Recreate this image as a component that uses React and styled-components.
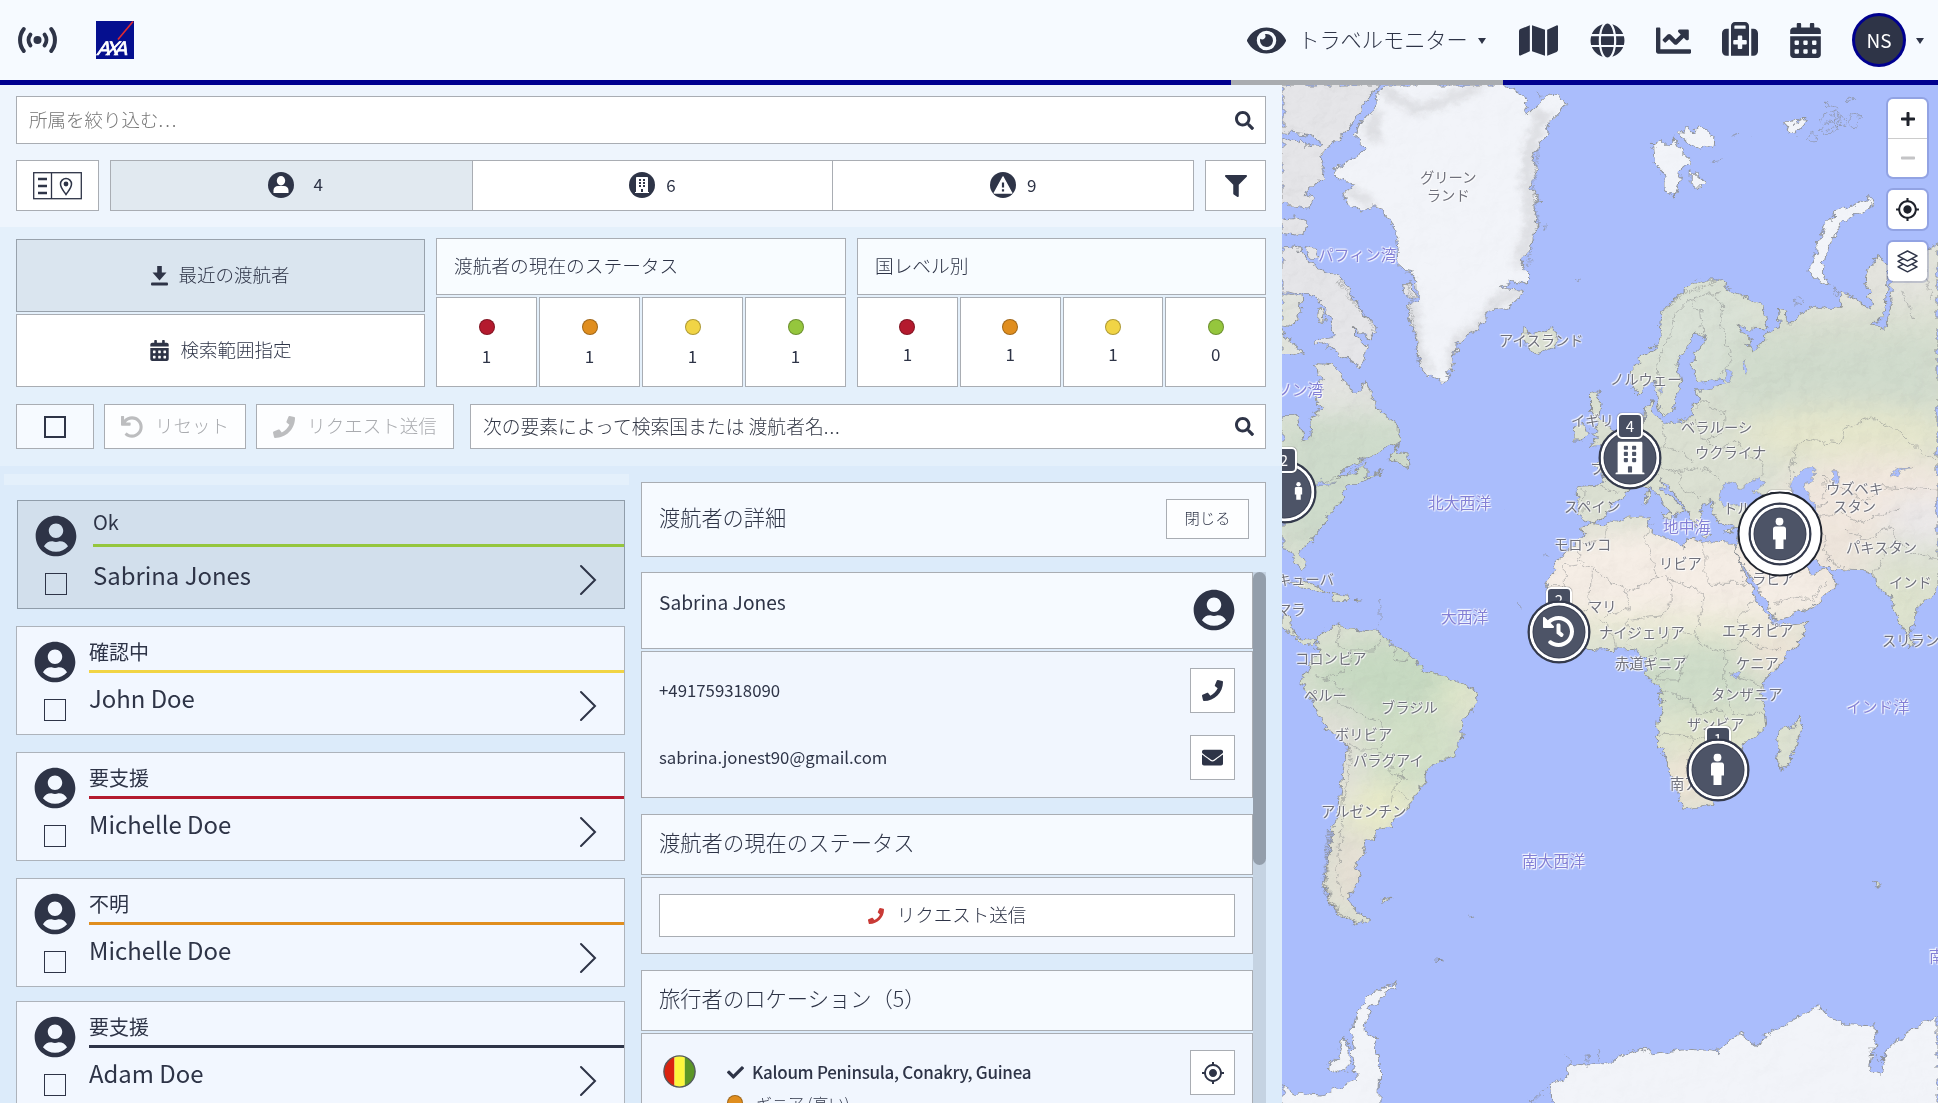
import React from "react";
import styled, { createGlobalStyle } from "styled-components";
import {
  FaEye, FaMap, FaGlobe, FaChartLine, FaCalendarAlt, FaSearch, FaFilter, FaUndo,
  FaPhone, FaEnvelope, FaCheck, FaUserCircle, FaBuilding, FaHistory, FaPlus, FaMinus,
} from "react-icons/fa";
import { FaSuitcaseMedical } from "react-icons/fa6";
import { MdMyLocation } from "react-icons/md";

const INK = "#2e3447";
const NAVY = "#00008f";
const LINE = "#a9adb3";
const RED = "#b41a2e";
const ORANGE = "#e08e1f";
const YELLOW = "#f1d445";
const GREEN = "#95c63d";

const Global = createGlobalStyle`
  *, *::before, *::after { box-sizing: border-box; }
  body { margin: 0; overflow: hidden; font-family: "Noto Sans CJK JP", "Noto Sans", sans-serif; color: ${INK}; }
  svg { display: block; flex: none; }
`;

const Page = styled.div`
  width: 1938px; height: 1103px; display: flex; flex-direction: column; overflow: hidden;
  background: #dcebfa;
`;

/* ---------- header ---------- */
const Header = styled.header`
  height: 85px; flex: none; display: flex; justify-content: space-between;
  background: #f6faff; border-bottom: 5px solid ${NAVY};
`;
const Brand = styled.div`
  display: flex; align-items: center; gap: 39px; padding-left: 18px; height: 80px;
`;
const Nav = styled.nav`display: flex; height: 85px; padding-right: 14px;`;
const NavActive = styled.div`
  width: 272px; height: 85px; padding: 0 17px 0 16px; display: flex; align-items: center;
  justify-content: space-between;
  border-bottom: 5px solid #a9acb0; font-size: 21.2px; font-weight: 300; white-space: nowrap;
  span { margin: -2px -2px 0 0; line-height: 30px; }
`;
const NavIcons = styled.div`
  height: 80px; display: flex; align-items: center; padding-left: 15px;
`;
const NavItem = styled.div`
  width: ${(p) => p.$w}px; margin-right: ${(p) => p.$gap}px; display: flex; justify-content: center;
`;
const Avatar = styled.div`
  width: 54px; height: 54px; border-radius: 50%; border: 3px solid ${NAVY}; background: ${INK};
  color: #fff; font-size: 19px; line-height: 47px; text-align: center; margin-right: 10px;
`;
const Caret = styled.i`
  border: 4.5px solid transparent; border-top: 6px solid ${INK}; border-bottom: 0; margin-top: 2px;
`;

/* ---------- left side ---------- */
const Body = styled.div`flex: 1; min-height: 0; display: flex;`;
const Panel = styled.main`width: 1282px; flex: none; display: flex; flex-direction: column;`;
const Band = styled.section`
  flex: none; height: ${(p) => p.$h}px; padding: ${(p) => p.$top}px 16px 0; background: ${(p) => p.$bg};
`;
const Row = styled.div`display: flex; gap: ${(p) => p.$gap || 10}px; margin-top: ${(p) => p.$mt || 0}px;`;
const SearchBox = styled.div`
  height: ${(p) => p.$h}px; flex: 1; border: 1px solid ${LINE}; background: #fff; margin-left: ${(p) => p.$ml || 0}px;
  display: flex; align-items: center; justify-content: space-between; padding: 0 11px 0 12px;
  font-size: ${(p) => p.$size}px; font-weight: 300; color: ${(p) => (p.$dim ? "#767676" : "#333846")};
  span { line-height: 28px; margin-top: -2px; }
  b { font-weight: 300; letter-spacing: ${(p) => (p.$dim ? 2 : 1)}px; }
  svg { color: ${INK}; }
`;
const IconButton = styled.button`
  width: ${(p) => p.$w}px; height: ${(p) => p.$h}px; padding: 0; border: 1px solid ${LINE};
  background: ${(p) => p.$bg || "#fff"}; display: flex; align-items: center; justify-content: center; color: ${INK};
`;
const Tabs = styled.div`
  flex: 1; height: 51px; display: grid; grid-template-columns: repeat(3, 1fr); border: 1px solid ${LINE}; background: #fff;
`;
const Tab = styled.div`
  display: flex; align-items: center; justify-content: center; gap: ${(p) => p.$gap}px;
  padding-left: ${(p) => (p.$on ? 8 : 0)}px;
  font-size: 17px; background: ${(p) => (p.$on ? "#e1e9f0" : "#fff")};
  & + & { border-left: 1px solid ${LINE}; }
  svg { margin-top: -1px; }
  span { line-height: 24px; margin-top: ${(p) => (p.$on ? -4 : -1)}px; }
`;
const RoundBadge = styled.div`
  width: 26px; height: 26px; border-radius: 50%; background: ${INK}; color: #fff;
  display: flex; align-items: center; justify-content: center; margin-top: -1px;
`;
const Choices = styled.div`width: 409px; height: 149px; display: flex; flex-direction: column; gap: 2px; padding-top: 1px;`;
const Choice = styled.div`
  flex: 1; display: flex; align-items: center; justify-content: center; gap: 10px;
  border: 1px solid ${(p) => (p.$on ? "#98a2ac" : LINE)}; background: ${(p) => (p.$on ? "#dae5ef" : "#fff")};
  font-size: 18.5px; font-weight: 300;
  span { line-height: 28px; margin-top: -3px; }
`;
const Stats = styled.div`width: ${(p) => p.$w}px; display: flex; flex-direction: column; gap: 2px;`;
const StatsTitle = styled.div`
  height: 57px; border: 1px solid ${LINE}; background: #f8fcff; padding-left: 17px;
  font-size: 18.7px; font-weight: 300; line-height: 52px;
`;
const StatsRow = styled.div`display: flex; gap: 2px; height: 90px;`;
const Stat = styled.div`
  flex: 1; border: 1px solid ${LINE}; background: #fff; display: flex; flex-direction: column;
  align-items: center; padding-top: 21px; font-size: 17px; line-height: 24px; gap: ${(p) => p.$gap}px;
`;
const Dot = styled.i`
  width: 16px; height: 16px; border-radius: 50%; flex: none; background: ${(p) => p.$c};
  border: 1px solid rgba(0, 0, 0, 0.28);
`;
const Square = styled.i`
  width: ${(p) => p.$s}px; height: ${(p) => p.$s}px; flex: none; border: ${(p) => p.$b || 1}px solid ${INK};
`;
const Action = styled.button`
  width: ${(p) => p.$w}px; height: 45px; padding: 0; border: 1px solid ${LINE}; background: #fdfeff;
  display: flex; align-items: center; justify-content: center; gap: 12px;
  font: 300 18.5px "Noto Sans CJK JP", sans-serif; color: #a9abaf;
  svg { color: #bcbdbf; }
  span { line-height: 28px; margin-top: -3px; }
`;

/* ---------- traveller list ---------- */
const Columns = styled.div`flex: 1; min-height: 0; display: flex; overflow: hidden;`;
const List = styled.div`width: 641px; flex: none; padding: 8px 12px 0 4px;`;
const Strip = styled.div`height: 11px; background: #e4f0fb; margin-bottom: 15px;`;
const Card = styled.article`
  height: 109px; margin: 0 4px ${(p) => p.$mb}px ${(p) => (p.$on ? 13 : 12)}px; display: flex;
  border: 1px solid ${(p) => (p.$on ? "#909daa" : "#adb3bb")};
  background: ${(p) => (p.$on ? "#d2dfec" : "#f2f7ff")};
`;
const CardSide = styled.div`
  width: ${(p) => (p.$on ? 75 : 72)}px; padding: 14px 0 0 17px; flex: none;
  display: flex; flex-direction: column; gap: 16px;
  i { margin-left: 10px; }
`;
const CardMain = styled.div`flex: 1; display: flex; flex-direction: column;`;
const CardStatus = styled.div`
  height: 46px; border-bottom: 3px solid ${(p) => p.$c}; font-size: 20px;
  line-height: ${(p) => (p.$on ? 42 : 49)}px; white-space: nowrap;
`;
const CardName = styled.div`
  flex: 1; display: flex; justify-content: space-between; padding-right: 27px;
  font-size: 23.9px; line-height: ${(p) => (p.$on ? 56 : 50)}px;
  svg { margin-top: 17px; }
`;

/* ---------- details ---------- */
const Details = styled.div`flex: 1; min-width: 0; padding: 16px 16px 0 0; display: flex; flex-direction: column;`;
const DetailsHead = styled.div`
  height: 75px; flex: none; border: 1px solid ${LINE}; background: #f6faff; display: flex;
  align-items: center; justify-content: space-between; padding: 0 16px 2px 17px;
  font-size: 21.2px; font-weight: 300; margin-bottom: 15px;
  span { line-height: 30px; margin-top: -3px; }
`;
const CloseButton = styled.button`
  width: 83px; height: 40px; border: 1px solid ${LINE}; background: #fdfeff; padding: 0 0 3px;
  font: 300 15.3px "Noto Sans CJK JP", sans-serif; color: ${INK};
`;
const Scroller = styled.div`flex: 1; min-height: 0; display: flex; overflow: hidden;`;
const Content = styled.div`flex: 1; min-width: 0;`;
const Track = styled.div`width: 13px; flex: none; background: #c5d3e2;`;
const Thumb = styled.div`height: 293px; border-radius: 7px; background: #939eab;`;
const Box = styled.div`
  height: ${(p) => p.$h}px; border: 1px solid ${LINE}; background: ${(p) => (p.$head ? "#f6faff" : "#f1f6fe")};
  margin-bottom: ${(p) => p.$mb || 0}px; padding: ${(p) => p.$pad || "0 17px"};
`;
const BoxTitle = styled.div`font-size: 21.3px; font-weight: 300; line-height: 54px; white-space: nowrap;`;
const Person = styled.div`
  display: flex; justify-content: space-between; font-size: 19.2px; line-height: 58px;
  svg { margin-top: 16px; }
`;
const Contact = styled.div`
  display: flex; justify-content: space-between; align-items: center; font-size: 16.8px; height: 45px;
  margin-bottom: 22px;
  span { margin-top: -2px; }
`;
const Request = styled.button`
  width: 100%; height: 43px; padding: 0 0 3px; border: 1px solid ${LINE}; background: #fff;
  display: flex; align-items: center; justify-content: center; gap: 13px;
  font: 300 18.5px/28px "Noto Sans CJK JP", sans-serif; color: ${INK};
  svg { margin-top: 3px; }
`;
const Place = styled.div`display: flex;`;
const FlagCell = styled.div`height: 43px; display: flex; align-items: center;`;
const PlaceText = styled.div`flex: 1; min-width: 0; padding: 4px 0 0 31px;`;
const PlaceLine = styled.div`
  display: flex; align-items: center; gap: ${(p) => p.$gap}px; white-space: nowrap;
  font-size: ${(p) => p.$size}px; font-weight: ${(p) => p.$weight}; line-height: 36px; height: ${(p) => p.$h}px;
  letter-spacing: ${(p) => p.$ls || 0}px;
`;

/* ---------- map ---------- */
const MapArea = styled.aside`
  width: 656px; position: relative; overflow: hidden; background: #aabdfc;
`;
const Label = styled.span`
  position: absolute; left: ${(p) => p.$x - 1282}px; top: ${(p) => p.$y - 86}px; transform: translateY(-50%);
  white-space: nowrap; text-align: center; line-height: 17.5px; font-size: ${(p) => (p.$sea ? 15.8 : 14.3)}px;
  color: ${(p) => (p.$sea ? "#8380d6" : "#6f707b")};
  text-shadow: 0 0 2px #fff, 0 0 2px #fff, 1px 1px 1px rgba(255,255,255,.8), -1px -1px 1px rgba(255,255,255,.8);
`;
const Figure = styled.div`
  position: absolute; left: ${(p) => p.$x - 1282}px; top: ${(p) => p.$y - 85}px; transform: translateY(-50%);
`;
const Pin = styled.div`
  position: absolute; left: ${(p) => p.$x - 1282}px; top: ${(p) => p.$y - 85}px;
  transform: translate(-50%, -50%); width: 63px; height: 63px; border-radius: 50%;
  border: 2px solid #343a4c; background: #4d5467; box-shadow: inset 0 0 0 3px #fff, inset 0 0 0 4px #3d4356;
  color: #fff; display: flex; align-items: center; justify-content: center;
`;
const Halo = styled.div`
  position: absolute; left: ${(p) => p.$x - 1282}px; top: ${(p) => p.$y - 85}px;
  transform: translate(-50%, -50%); width: 85px; height: 85px; border-radius: 50%;
  border: 2px solid #20242e; background: #fff;
`;
const Count = styled.div`
  position: absolute; left: ${(p) => p.$x - 1282}px; top: ${(p) => p.$y - 85}px; transform: translateX(-50%);
  width: 26px; height: 26px; border: 2px solid #fff; border-radius: 5px; background: #474e61; color: #fff;
  font-size: 15px; line-height: 21px; text-align: center; box-shadow: 0 0 1px #222;
`;
const Controls = styled.div`
  position: absolute; top: 14px; right: 11px; display: flex; flex-direction: column; gap: 13px;
`;
const ControlGroup = styled.div`
  width: 39px; border-radius: 5px; background: #fff; box-shadow: 0 0 0 2px rgba(70, 85, 150, 0.24); overflow: hidden;
`;
const Control = styled.div`
  height: ${(p) => p.$h || 39}px; display: flex; align-items: center; justify-content: center; color: ${(p) => p.$c || "#1f222b"};
  & + & { border-top: 1px solid #ccc; }
`;

/* ---------- drawings ---------- */
const Broadcast = () => (
  <svg width="39" height="28" viewBox="0 0 39 28" fill="none" stroke={INK} strokeWidth="4" strokeLinecap="round">
    <circle cx="19.5" cy="14" r="4" fill={INK} stroke="none" />
    <path d="M12.4 8.600C10 11.800 10 16.200 12.400 19.400M26.600 8.600c2.400 3.200 2.400 7.600 0 10.800" />
    <path d="M5.800 3C.8 9.400.8 18.600 5.800 25M33.200 3c5 6.400 5 15.600 0 22" />
  </svg>
);
const AxaLogo = () => (
  <svg width="38" height="38" viewBox="0 0 38 38">
    <rect width="38" height="38" fill="#050f8f" />
    <path d="M22 18.500L37 .5" stroke="#e22a2f" strokeWidth="1.600" />
    <text x="0" y="0" transform="translate(.5 34) skewX(-16)" fill="#fff" stroke="#fff" strokeWidth=".7"
      fontFamily="Liberation Sans, sans-serif" fontSize="19.500" textLength="30.500" lengthAdjust="spacing">AXA</text>
  </svg>
);
const SplitView = () => (
  <svg width="49" height="28" viewBox="0 0 49 28" fill="none" stroke={INK}>
    <rect x=".7" y=".7" width="47.600" height="26" strokeWidth="1.300" />
    <path d="M18.500 1v26" strokeWidth="1.300" />
    <path d="M5 7h9M5 14h9M5 21h9" strokeWidth="2.600" />
    <path d="M33 22.500c-3.500-5-5.500-7-5.500-10.500a5.500 5.500 0 0 1 11 0c0 3.500-2 5.500-5.500 10.500z" strokeWidth="1.500" />
    <circle cx="33" cy="12" r="2.400" fill={INK} stroke="none" />
  </svg>
);
const UserSmall = () => (
  <svg width="26" height="26" viewBox="0 0 26 26">
    <circle cx="13" cy="13" r="13" fill={INK} />
    <ellipse cx="13" cy="8.800" rx="4.200" ry="4.700" fill="#fff" />
    <path d="M5.500 21v-2.500c0-3 2-4.500 4.500-4.500h6c2.500 0 4.500 1.500 4.500 4.500V21z" fill="#fff" />
  </svg>
);
const Warning = () => (
  <svg width="26" height="26" viewBox="0 0 26 26">
    <circle cx="13" cy="13" r="13" fill={INK} />
    <path d="M13 5L21.700 21H4.300z" fill="#fff" stroke="#fff" strokeWidth="1.500" strokeLinejoin="round" />
    <path d="M13 10.500v5M13 17.200v2.200" stroke={INK} strokeWidth="2.200" />
  </svg>
);
const Download = () => (
  <svg width="17" height="20" viewBox="0 0 17 20" fill={INK}>
    <path d="M6.200 0h4.600v6.500h4.700L8.500 14.500 1.500 6.500h4.700z" />
    <rect y="16.500" width="17" height="3" rx="1" />
  </svg>
);
const Chevron = () => (
  <svg width="18" height="32" viewBox="0 0 18 32" fill="none" stroke={INK} strokeWidth="2" strokeLinecap="round">
    <path d="M2 2l14 14L2 30" />
  </svg>
);
const Flag = () => (
  <svg width="33" height="33" viewBox="0 0 33 33">
    <clipPath id="flag"><circle cx="16.500" cy="16.500" r="15.800" /></clipPath>
    <g clipPath="url(#flag)">
      <rect width="11.500" height="33" fill="#da2310" />
      <rect x="11.500" width="10.300" height="33" fill="#fdf73c" />
      <rect x="21.800" width="12" height="33" fill="#5b9626" />
    </g>
    <circle cx="16.500" cy="16.500" r="15.600" fill="none" stroke="#545a60" strokeWidth="1.300" />
  </svg>
);
const Man = ({ h }) => (
  <svg width={h * 0.5} height={h} viewBox="0 0 16 32" fill="#fff">
    <circle cx="8" cy="4" r="3.900" />
    <path d="M4 9h8c1.500 0 2.500 1 2.500 2.500V22H12v9.500H4V22H1.500V11.500C1.500 10 2.500 9 4 9z" />
  </svg>
);
const Layers = () => (
  <svg width="23" height="23" viewBox="0 0 23 23" fill="#fff" stroke={INK} strokeWidth="1.500" strokeLinejoin="round">
    <path d="M11.500 12l9.500 4.800-9.500 5-9.500-5z" />
    <path d="M11.500 6.500l9.500 4.800-9.500 5-9.500-5z" />
    <path d="M11.500 1l9.500 4.800-9.500 5-9.500-5z" />
  </svg>
);

const LAND = [
  "M5,640L45,645 50,690 30,740 5,735Z M5,750L30,790 55,815 30,825 5,820Z M92,690L108,695 105,725 90,715Z",
  "M85,850L125,855 145,880 160,910 180,945 195,930 203,900 220,950 235,985 245,1000 282,1035 282,1085 245,1110 205,1130 165,1160 135,1195 180,1180 205,1150 205,1190 245,1175 195,1210 165,1210 150,1235 148,1260 115,1300 100,1345 85,1365 50,1410 45,1420 62,1460 58,1472 40,1450 30,1410 5,1405 5,1010 40,1010 60,1080 75,1070 70,1010 95,990 85,960 100,920Z",
  "M285,1085L275,1110 258,1140 285,1150 310,1160 305,1125 280,1120Z",
  "M20,1508L60,1503 100,1525 112,1545 70,1525 30,1518Z M125,1540L165,1550 165,1562 120,1560Z M180,1557L195,1557 195,1563 180,1563Z",
  "M5,1600L25,1615 30,1650 40,1670 85,1680 80,1698 45,1680 5,1640Z",
  "M85,1680L110,1650 140,1630 150,1645 200,1650 235,1655 250,1680 290,1705 330,1745 335,1770 380,1785 440,1810 470,1835 472,1865 437,1920 432,1980 412,2030 350,2065 345,2095 325,2150 300,2190 275,2210 268,2240 228,2250 225,2280 205,2280 200,2310 178,2360 192,2380 180,2420 163,2460 170,2480 210,2517 180,2535 140,2510 118,2460 105,2410 115,2340 125,2260 140,2190 150,2080 160,1990 110,1945 80,1870 55,1810 75,1750 95,1700Z",
  "M585,745L600,765 650,742 662,770 655,800 615,822 590,800 575,775Z",
  "M740,945L765,930 755,960 770,970 765,1010 800,1060 790,1090 745,1100 760,1075 745,1060 760,1030 740,990Z M700,1040L725,1030 735,1060 720,1080 698,1080Z",
  "M835,870L850,850 890,800 905,770 910,700 945,650 975,615 1010,600 1050,600 1070,630 1110,650 1150,680 1162,720 1150,750 1110,745 1090,735 1100,760 1130,775 1110,790 1125,810 1155,790 1155,765 1190,735 1185,685 1210,690 1208,730 1218,732 1235,705 1275,675 1300,690 1335,675 1340,640 1370,650 1410,690 1395,600 1400,570 1425,530 1445,545 1450,590 1440,700 1412,738 1442,748 1460,690 1455,610 1475,560 1568,490 1568,1535 1515,1580 1515,1630 1497,1665 1470,1610 1455,1550 1420,1520 1415,1490 1385,1472 1320,1468 1285,1450 1250,1430 1235,1415 1245,1450 1265,1485 1300,1465 1330,1510 1270,1580 1180,1622 1165,1570 1135,1520 1100,1450 1085,1410 1095,1345 1050,1330 1030,1300 1040,1262 1010,1270 1000,1290 1010,1330 990,1345 970,1290 940,1240 905,1200 910,1220 965,1290 945,1315 930,1295 885,1225 850,1215 815,1255 790,1270 775,1310 745,1335 712,1305 708,1220 760,1215 775,1205 770,1180 745,1150 780,1120 830,1080 865,1035 870,980 885,960 890,1010 920,1030 980,1015 985,970 1005,960 990,935 1060,915 1060,895 1000,905 985,880 985,820 1010,795 1015,770 990,762 965,810 945,850 955,900 935,990 910,1005 890,900 850,945 838,905Z",
  "M870,1230L878,1240 876,1280 868,1275Z M905,1300L938,1300 930,1322Z M1000,1368L1025,1370 1010,1376Z M1060,1350L1085,1345 1068,1360Z",
  "M740,1330L775,1335 820,1315 880,1310 888,1360 930,1380 960,1400 975,1375 1010,1385 1080,1390 1088,1425 1112,1490 1128,1550 1150,1580 1175,1625 1185,1640 1255,1630 1250,1660 1200,1740 1155,1800 1148,1840 1158,1940 1105,1990 1095,2050 1060,2140 1030,2175 965,2188 950,2150 925,2060 897,1970 902,1925 914,1880 905,1830 870,1780 872,1735 840,1705 760,1710 700,1705 650,1650 625,1610 640,1560 635,1520 660,1440 700,1395 725,1350Z",
  "M1237,1908L1243,1940 1215,2055 1195,2067 1183,2040 1192,1950 1220,1940Z M1492,1660L1512,1680 1505,1705 1494,1690Z",
  "M1415,2405L1428,2412 1420,2422Z M237,2455L265,2458 245,2470Z M447,2502L465,2518 455,2510Z M372,2640L388,2643Z",
].join(" ");
const ICE = [
  "M262,15L240,28 228,45 232,70 226,92 205,108 190,135 180,165 198,185 200,215 160,245 128,270 133,290 160,305 178,318 150,340 160,370 190,390 222,378 250,392 268,430 278,470 282,520 285,570 310,575 328,600 330,660 308,680 305,710 320,760 322,800 335,850 355,888 390,908 405,880 415,840 420,790 440,770 470,750 490,710 500,690 540,685 585,632 530,625 545,600 590,615 590,580 570,540 600,500 612,440 605,400 618,350 596,320 612,270 600,230 615,200 635,165 640,130 670,90 680,70 665,45 640,42 610,80 590,100 580,50 540,15Z",
  "M890,190L910,182 925,200 940,175 960,220 980,245 955,270 942,355 920,330 920,290 895,250Z M950,160L970,140 985,160 1000,138 1032,165 1030,195 1000,210 975,185Z M980,270L1010,305 995,325 980,310Z M1200,130L1225,130 1245,115 1255,130 1230,165 1215,160Z",
  "M1408,350L1412,370 1380,400 1340,425 1320,470 1300,520 1295,580 1308,612 1285,605 1258,570 1275,530 1285,480 1300,430 1325,395 1365,380Z",
  "M5,3015L40,3040 100,3045 180,3000 170,2880 180,2810 210,2750 250,2720 285,2705 260,2730 215,2780 200,2850 225,2880 240,2960 238,3080 5,3080Z M150,2870L165,2910 165,2970 140,2980 112,2960 140,2935Z",
  "M650,3080L645,3020 685,2990 690,2950 730,2955 785,2945 860,2905 890,2925 980,2905 1040,2915 1095,2860 1140,2900 1155,2865 1240,2810 1285,2775 1305,2805 1345,2830 1415,2835 1420,2880 1410,2920 1405,2965 1430,2980 1450,2900 1500,2860 1530,2825 1568,2810 1568,3080Z",
].join(" ");
const FRINGE = "M245,20L280,60 330,90 400,60 480,15 M230,90L215,160 240,180 M600,90L630,110 600,180 590,280 600,420 570,560 M300,600L318,700 325,800 350,880 M585,632L520,660 480,740 425,780 410,870 M160,330L220,370";
const ARCTIC = "M5,15L235,15 215,50 200,70 190,100 160,150 135,185 110,210 95,225 105,250 100,290 75,325 60,340 80,360 70,385 40,380 5,375 5,170 45,195 50,175 70,200 100,190 60,160 5,155Z M5,420L40,410 65,425 60,455 40,465 5,460Z M5,500L40,498 60,540 100,575 140,590 160,620 180,660 200,710 232,740 215,780 180,740 180,770 205,800 200,840 190,860 150,830 120,800 85,790 95,775 130,770 120,730 110,690 75,640 40,640 5,635Z M60,500L85,505 95,535 65,530Z M295,610L320,610 322,650 300,655Z";
const SEAS = [
  "M1052,1235L1060,1210 1075,1210 1095,1225 1110,1215 1140,1195 1150,1215 1130,1235 1165,1250 1200,1270 1190,1288 1130,1275 1090,1275 1060,1285 1045,1262Z",
  "M1215,1215L1240,1170 1270,1165 1268,1205 1250,1215 1262,1250 1280,1290 1275,1340 1245,1345 1235,1300 1225,1260Z",
  "M1320,1175L1330,1175 1332,1205 1318,1212Z M1455,1185L1475,1165 1505,1165 1480,1172 1462,1190Z M1062,870L1085,880 1075,905 1062,895Z M1102,842L1115,870 1112,885 1102,870Z M1078,1778L1096,1778 1090,1797 1076,1792Z M905,925L915,922 908,940Z",
  "M85,1210L98,1200 110,1215 130,1205 120,1218 95,1220Z",
].join(" ");
const BORDERS = [
  "M905,920L900,840 930,760 945,700 975,660 1010,650 1025,640 1050,635 M985,665L1000,690 1005,760 M1040,640L1055,680 1050,730 1075,840 1050,885",
  "M985,990L1010,960 1030,985 1060,1000 1060,1060 1010,1075 985,1020 M1010,1075L1040,1110 1090,1080 1110,1120 1150,1140 1145,1190 M910,1030L920,1100 895,1120 910,1160 950,1180 990,1160 1020,1170 1050,1200 M920,1100L960,1120 985,1145 M860,1215L880,1180 905,1190 M790,1110L840,1150 850,1200 M765,1220L810,1240 M725,1225L722,1300 M950,1180L960,1240 985,1230 1000,1260",
  "M1215,1210L1225,1110 1250,1075 1335,1095 1345,1045 1410,1010 1480,1060 1530,1120 1568,1140 M1270,1290L1300,1270 1295,1190 1340,1230 1400,1260 1440,1220 1568,1230 M1280,1310L1340,1300 1390,1330 1430,1300 1470,1290 M1290,1350L1310,1440 1340,1465 M1340,1350L1400,1380 1450,1340 1470,1380 1440,1420 1415,1490 M1470,1380L1510,1420 1568,1440 M1130,1290L1200,1300 1220,1340 1200,1390 1235,1415 M1095,1400L1150,1420 1200,1460 1240,1470 M1180,1570L1220,1550 1270,1560 1300,1500",
  "M775,1340L775,1375 712,1400 712,1445 M712,1440L830,1540 900,1490 880,1420 870,1370 890,1330 M830,1540L830,1585 780,1610 M900,1490L930,1495 1005,1540 1005,1590 990,1650 1000,1690 M1015,1385L1015,1510 1110,1510 M930,1495L935,1560 910,1610 840,1620 M740,1470L735,1590 710,1600 M640,1520L680,1520 680,1460 710,1455 M640,1595L690,1610 715,1650 M760,1620L790,1650 800,1700 M830,1615L830,1690 M870,1735L920,1690 925,1650 990,1660 M1000,1690L1060,1720 1110,1680 1140,1700 1190,1710 M1110,1680L1090,1620 1130,1560 M1060,1720L1060,1800 1080,1900 1150,1900 M905,1830L940,1840 980,1865 990,1900 1050,1890 M897,1965L980,1970 1010,1975 M980,1975L980,2020 970,2080 M1050,1890L1060,1920 1020,1960 M1070,1780L1110,1800 1155,1820 M930,1740L900,1800 950,1800 970,1720",
  "M140,1640L135,1690 170,1710 160,1770 110,1800 80,1790 M170,1710L230,1710 240,1680 M270,1695L275,1740 300,1745 310,1715 M110,1800L150,1830 140,1870 175,1890 240,1930 250,1990 230,2010 190,2010 165,1990 M230,2010L265,2040 265,2080 300,2090 M300,2060L270,2130 265,2170 M270,2130L310,2160 M160,2000L170,2040 155,2140 145,2280 135,2400 150,2460",
  "M5,1270L40,1250 90,1220 120,1200 150,1190 M155,1190L200,1140",
  "M1480,630L1500,680 1510,720 M1535,560L1540,610 1555,650",
];
const PLAIN_OUTLINES = "M1290,130q10,-40 20,-30t10,30q10,20 -10,30t-20,-10q10,-20 20,-30 M1350,60q-5,-10 10,-8t0,14z M1365,95q20,5 15,25t-20,20q-10,-20 5,-45 M1335,110q15,-10 15,10t-20,20z M1265,155q15,5 10,25t-20,-5z M1300,60q15,10 0,20z M1310,75l20,10 -15,15 20,5 -25,20 15,15 -20,10 M1225,660q10,-20 20,0t-15,15z M1320,620l15,20 -8,5z M598,3069L640,3020 M1420,2890L1405,2910 1438,2950 1445,2905 M690,2950L685,2930 M735,2945L728,2920 M760,2940L765,2910 M625,430q12,-5 8,15z M615,25l5,30 M1120,165l3,3 M1075,168l14,-8 M1030,245l30,-5 M705,605l12,-8 M535,1285l5,3 M630,1430l15,5 M565,1570l18,20 M235,1560q8,40 0,80";

const WorldMap = () => (
  <svg width="656" height="1018" viewBox="5 15 1563 3054" preserveAspectRatio="none">
    <defs>
      <filter id="coast" x="0" y="0" width="1568" height="3080" filterUnits="userSpaceOnUse">
        <feTurbulence type="fractalNoise" baseFrequency="0.045" numOctaves="4" seed="4" result="n" />
        <feDisplacementMap in="SourceGraphic" in2="n" scale="28" xChannelSelector="R" yChannelSelector="G" />
      </filter>
      <filter id="relief" x="0" y="0" width="1568" height="3080" filterUnits="userSpaceOnUse">
        <feTurbulence type="fractalNoise" baseFrequency="0.012" numOctaves="5" seed="9" result="n" />
        <feDiffuseLighting in="n" surfaceScale="14" lightingColor="#fff" result="l">
          <feDistantLight azimuth="225" elevation="58" />
        </feDiffuseLighting>
        <feComposite in="l" in2="SourceGraphic" operator="in" />
      </filter>
      <filter id="soft" x="-50%" y="-50%" width="200%" height="200%"><feGaussianBlur stdDeviation="38" /></filter>
      <filter id="fade"><feGaussianBlur stdDeviation="12" /></filter>
      <clipPath id="landclip"><path d={LAND} /></clipPath>
      <clipPath id="iceclip"><path d={ICE} /></clipPath>
    </defs>
    <g filter="url(#coast)">
      <path d={LAND} fill="#dce1d3" />
      <g clipPath="url(#landclip)">
        <g filter="url(#soft)">
          <rect x="0" y="560" width="280" height="430" fill="#e4e5e2" />
          <rect x="0" y="1010" width="320" height="400" fill="#cfdccc" />
          <ellipse cx="1000" cy="760" rx="140" ry="180" fill="#dae2d7" />
          <rect x="1180" y="450" width="400" height="230" fill="#e5e5df" />
          <rect x="1060" y="760" width="520" height="250" fill="#d1dccd" />
          <ellipse cx="1350" cy="1060" rx="260" ry="80" fill="#e6e7cd" />
          <ellipse cx="1430" cy="1250" rx="240" ry="120" fill="#f2e8df" />
          <ellipse cx="1540" cy="1320" rx="100" ry="80" fill="#ece9ea" />
          <ellipse cx="1270" cy="1420" rx="150" ry="100" fill="#efe6dd" />
          <ellipse cx="1230" cy="1540" rx="130" ry="90" fill="#f5ede5" />
          <ellipse cx="900" cy="1490" rx="330" ry="150" fill="#f6eee6" />
          <ellipse cx="900" cy="1640" rx="330" ry="36" fill="#ebebd5" />
          <ellipse cx="1000" cy="1790" rx="190" ry="110" fill="#cfddc9" />
          <ellipse cx="1180" cy="1720" rx="80" ry="70" fill="#eee4d8" />
          <ellipse cx="1030" cy="1960" rx="170" ry="60" fill="#e0e5cc" />
          <ellipse cx="990" cy="2100" rx="100" ry="80" fill="#efe5d6" />
          <ellipse cx="1490" cy="1560" rx="60" ry="100" fill="#dfe4ce" />
          <ellipse cx="260" cy="1800" rx="190" ry="120" fill="#c7dac2" />
          <ellipse cx="320" cy="2010" rx="120" ry="120" fill="#d2e0c7" />
          <ellipse cx="240" cy="2190" rx="80" ry="80" fill="#eaecc9" />
          <ellipse cx="170" cy="2370" rx="40" ry="130" fill="#e9dfd5" />
          <ellipse cx="140" cy="2020" rx="22" ry="190" fill="#e9e1e1" />
          <ellipse cx="430" cy="1850" rx="50" ry="60" fill="#e3e9cc" />
        </g>
      </g>
      <path d={ARCTIC} fill="#e6e6e9" />
      <path d={ICE} fill="#f2f4f9" />
      <g clipPath="url(#iceclip)">
        <path d={FRINGE} fill="none" stroke="#d9dade" strokeWidth="26" filter="url(#fade)" />
      </g>
    </g>
    <g filter="url(#coast)" style={{ mixBlendMode: "multiply" }} opacity=".13">
      <path d={LAND + ARCTIC} filter="url(#relief)" />
    </g>
    <g filter="url(#coast)" style={{ mixBlendMode: "multiply" }} opacity=".05">
      <path d={ICE} filter="url(#relief)" />
    </g>
    <g filter="url(#coast)" fill="none" stroke="#858788" strokeOpacity=".85">
      <path d={LAND + ARCTIC + ICE} strokeWidth="2.400" />
      <path d={SEAS} fill="#aabdfc" strokeWidth="1.500" />
      <path d={BORDERS.join(" ")} strokeWidth="1.900" strokeOpacity=".7" />
      <path d={PLAIN_OUTLINES} strokeWidth="1.800" />
      <path d="M118,2250L112,2330 108,2400 120,2460 145,2505 178,2530" strokeWidth="12" strokeDasharray="5 3" strokeOpacity=".6" />
      <path d="M615,200L605,300 612,420 590,560 M308,600L315,720 330,850 M910,700L960,640 1050,600 M140,600L225,750" strokeWidth="9" strokeDasharray="3 4" strokeOpacity=".45" />
    </g>
  </svg>
);

const labels = [
  ["パフィン湾", 1318, 256, 1], ["アイスランド", 1499, 341], ["ノルウェー", 1610, 380], ["ソン湾", 1276, 391, 1],
  ["イギリ", 1571, 421], ["ベラルーシ", 1681, 428], ["ウクライナ", 1695, 453], ["フ", 1590, 469], ["スペイン", 1564, 507],
  ["トル", 1723, 509], ["地中海", 1663, 528, 1], ["北大西洋", 1428, 504, 1], ["モロッコ", 1554, 545], ["リビア", 1659, 564],
  ["パキスタン", 1846, 548], ["インド", 1889, 583], ["スリランカ", 1882, 641], ["ラビア", 1752, 579], ["キューバ", 1277, 580],
  ["マラ", 1277, 610], ["大西洋", 1441, 618, 1], ["マリ", 1588, 607], ["ナイジェリア", 1599, 633], ["エチオピア", 1722, 631],
  ["コロンビア", 1295, 659], ["赤道ギニア", 1615, 664], ["ケニア", 1736, 664], ["ペルー", 1304, 696], ["ブラジル", 1381, 708],
  ["タンザニア", 1711, 695], ["インド洋", 1846, 708, 1], ["ザンビア", 1687, 725], ["ボリビア", 1335, 735],
  ["パラグアイ", 1353, 761], ["アルゼンチン", 1321, 812], ["南ア", 1670, 784], ["南大西洋", 1522, 862, 1], ["南", 1929, 957, 1],
];

const travellers = [
  { status: "Ok", name: "Sabrina Jones", color: GREEN, on: true, mb: 17 },
  { status: "確認中", name: "John Doe", color: YELLOW, mb: 17 },
  { status: "要支援", name: "Michelle Doe", color: RED, mb: 17 },
  { status: "不明", name: "Michelle Doe", color: ORANGE, mb: 14 },
  { status: "要支援", name: "Adam Doe", color: INK, mb: 0 },
];

const StatBlock = ({ title, values, w, gap }) => (
  <Stats $w={w}>
    <StatsTitle>{title}</StatsTitle>
    <StatsRow>
      {values.map((v, i) => (
        <Stat key={i} $gap={gap}>
          <Dot $c={[RED, ORANGE, YELLOW, GREEN][i]} />
          {v}
        </Stat>
      ))}
    </StatsRow>
  </Stats>
);

export default function App() {
  return (
    <Page>
      <Global />
      <Header>
        <Brand><Broadcast /><AxaLogo /></Brand>
        <Nav>
          <NavActive><FaEye size={39} /><span>トラベルモニター</span><Caret /></NavActive>
          <NavIcons>
            <NavItem $w={40} $gap={31}><FaMap size={39} /></NavItem>
            <NavItem $w={36} $gap={30}><FaGlobe size={35} /></NavItem>
            <NavItem $w={36} $gap={31}><FaChartLine size={35} /></NavItem>
            <NavItem $w={36} $gap={31}><FaSuitcaseMedical size={36} /></NavItem>
            <NavItem $w={32} $gap={31}><FaCalendarAlt size={35} /></NavItem>
            <Avatar>NS</Avatar>
            <Caret />
          </NavIcons>
        </Nav>
      </Header>
      <Body>
        <Panel>
          <Band $h={142} $top={11} $bg="#eef5fd">
            <Row>
              <SearchBox $h={48} $size={18.5} $dim><span>所属を絞り込む<b>...</b></span><FaSearch size={19} /></SearchBox>
            </Row>
            <Row $mt={16} $gap={11}>
              <IconButton $w={83} $h={51}><SplitView /></IconButton>
              <Tabs>
                <Tab $on $gap={20}><UserSmall /><span>4</span></Tab>
                <Tab $gap={11}><RoundBadge><FaBuilding size={16} /></RoundBadge><span>6</span></Tab>
                <Tab $gap={11}><Warning /><span>9</span></Tab>
              </Tabs>
              <IconButton $w={61} $h={51}><FaFilter size={22} /></IconButton>
            </Row>
          </Band>
          <Band $h={239} $top={11} $bg="#e4f0fb">
            <Row $gap={11}>
              <Choices>
                <Choice $on><Download /><span>最近の渡航者</span></Choice>
                <Choice><FaCalendarAlt size={21} /><span>検索範囲指定</span></Choice>
              </Choices>
              <StatBlock title="渡航者の現在のステータス" values={[1, 1, 1, 1]} w={410} gap={9} />
              <StatBlock title="国レベル別" values={[1, 1, 1, 0]} w={409} gap={7} />
            </Row>
            <Row $mt={17} $gap={10}>
              <IconButton $w={78} $h={45} $bg="#f6faff"><Square $s={22} $b={2} /></IconButton>
              <Action $w={142}><FaUndo size={22} /><span>リセット</span></Action>
              <Action $w={198}><FaPhone size={22} /><span>リクエスト送信</span></Action>
              <SearchBox $h={45} $ml={6} $size={18.8}><span>次の要素によって検索国または 渡航者名<b>...</b></span><FaSearch size={19} /></SearchBox>
            </Row>
          </Band>
          <Columns>
            <List>
              <Strip />
              {travellers.map((t, i) => (
                <Card key={i} $on={t.on} $mb={t.mb}>
                  <CardSide $on={t.on}><FaUserCircle size={42} /><Square $s={22} /></CardSide>
                  <CardMain>
                    <CardStatus $c={t.color} $on={t.on}>{t.status}</CardStatus>
                    <CardName $on={t.on}>{t.name}<Chevron /></CardName>
                  </CardMain>
                </Card>
              ))}
            </List>
            <Details>
              <DetailsHead><span>渡航者の詳細</span><CloseButton>閉じる</CloseButton></DetailsHead>
              <Scroller>
                <Content>
                  <Box $h={77} $mb={2} $head><Person>Sabrina Jones<FaUserCircle size={42} /></Person></Box>
                  <Box $h={147} $mb={16} $pad="16px 17px 0">
                    <Contact><span>+491759318090</span><IconButton $w={45} $h={45}><FaPhone size={21} /></IconButton></Contact>
                    <Contact><span>sabrina.jonest90@gmail.com</span><IconButton $w={45} $h={45}><FaEnvelope size={21} /></IconButton></Contact>
                  </Box>
                  <Box $h={61} $mb={2} $head><BoxTitle>渡航者の現在のステータス</BoxTitle></Box>
                  <Box $h={77} $mb={16} $pad="16px 17px">
                    <Request><FaPhone size={16} color="#c93a36" />リクエスト送信</Request>
                  </Box>
                  <Box $h={61} $mb={2} $head><BoxTitle>旅行者のロケーション（5）</BoxTitle></Box>
                  <Box $h={120} $pad="16px 17px 0 21px">
                    <Place>
                      <FlagCell><Flag /></FlagCell>
                      <PlaceText>
                        <PlaceLine $gap={8} $size={17} $weight={500} $h={36} $ls={-0.3}><FaCheck size={17} />Kaloum Peninsula, Conakry, Guinea</PlaceLine>
                        <PlaceLine $gap={13} $size={16} $weight={300} $h={25}><Dot $c={ORANGE} />ギニア (高い)</PlaceLine>
                      </PlaceText>
                      <IconButton $w={45} $h={45}><MdMyLocation size={24} /></IconButton>
                    </Place>
                  </Box>
                </Content>
                <Track><Thumb /></Track>
              </Scroller>
            </Details>
          </Columns>
        </Panel>
        <MapArea>
          <WorldMap />
          <Label $x={1420} $y={186}>グリーン<br />ランド</Label>
          {labels.map(([text, x, y, sea], i) => <Label key={i} $x={x} $y={y} $sea={sea}>{text}</Label>)}
          <Label $x={1826} $y={497}>ウズベキ<br />スタン</Label>
          <Pin $x={1284.5} $y={491.5} />
          <Figure $x={1294} $y={491}><Man h={18} /></Figure>
          <Count $x={1284} $y={447}>2</Count>
          <Pin $x={1629.5} $y={457.5}><FaBuilding size={33} /></Pin>
          <Count $x={1630} $y={413}>4</Count>
          <Count $x={1559} $y={587}>2</Count>
          <Pin $x={1558.5} $y={631.5}><FaHistory size={32} /></Pin>
          <Count $x={1779.5} $y={490} />
          <Halo $x={1779.5} $y={533.5} />
          <Pin $x={1779.5} $y={533.5}><Man h={32} /></Pin>
          <Count $x={1718} $y={726}>1</Count>
          <Pin $x={1717.5} $y={769.5}><Man h={32} /></Pin>
          <Controls>
            <ControlGroup>
              <Control><FaPlus size={16} /></Control>
              <Control $c="#c4c4c6"><FaMinus size={16} /></Control>
            </ControlGroup>
            <ControlGroup><Control $h={39}><MdMyLocation size={25} /></Control></ControlGroup>
            <ControlGroup><Control $h={39}><Layers /></Control></ControlGroup>
          </Controls>
        </MapArea>
      </Body>
    </Page>
  );
}
